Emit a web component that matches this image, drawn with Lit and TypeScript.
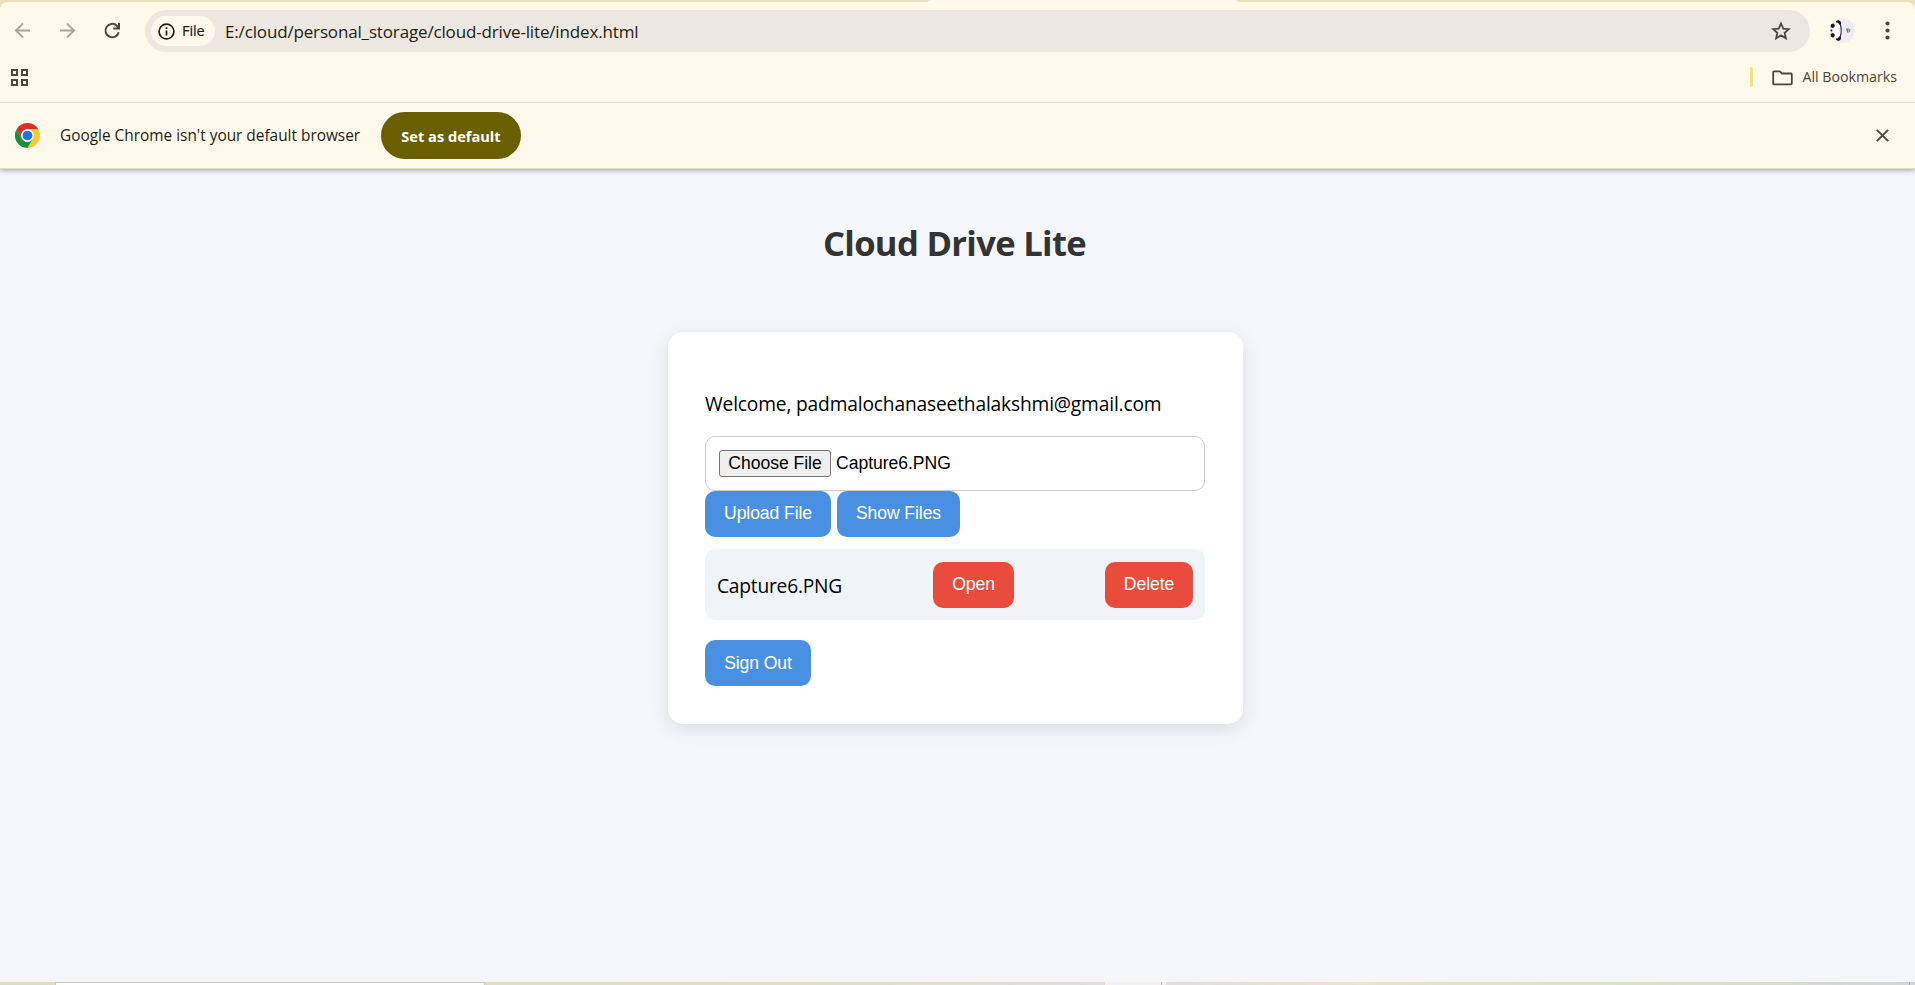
import { LitElement, html, css } from "lit";
import { customElement } from "lit/decorators.js";

@customElement("app-root")
class AppRoot extends LitElement {
  static styles = css`
    :host { display: flex; flex-direction: column; width: 100%; height: 985px; overflow: hidden; background: #f4f6fa; font-family: "Open Sans", sans-serif; color: #000; }
    * { box-sizing: border-box; }
    svg { display: block; flex: none; }
    .t { white-space: nowrap; }
    .chrome { flex: none; height: 169px; background: #ebe2bd; border-bottom: 1px solid #e4dcbc; box-shadow: 0 1px 5px rgba(60,64,67,.5); display: flex; flex-direction: column; }
    .strip { height: 2px; display: flex; justify-content: center; padding-left: 250px; }
    .tab { background: #fff7ea; width: 310px; border-radius: 4px 4px 0 0 / 2px 2px 0 0; }
    .body { flex: 1; display: flex; flex-direction: column; background: #fff9eb; border-radius: 8px 8px 0 0; }
    .bar { height: 58px; display: flex; align-items: center; }
    .omni { display: flex; align-items: center; height: 42px; margin-left: 23px; width: 1665px; border-radius: 21px; background: #ece8e1; padding: 0 19px 0 6px; }
    .chip { display: flex; align-items: center; gap: 7px; width: 64px; height: 30px; border-radius: 15px; background: #fff9eb; padding-left: 7px; font-size: 14.5px; font-weight: 500; color: #1e1c13; letter-spacing: -.1px; }
    .chip .t { -webkit-text-stroke: .2px; padding-bottom: 1px; }
    .url { margin-left: 10px; flex: 1; font-size: 17px; letter-spacing: -.155px; color: #1e1c13; }
    .nav { display: flex; width: 122px; padding-left: 10px; gap: 21px; }
    .avatar { margin-left: 19px; }
    .more { margin-left: 28px; }
    .marks { height: 42px; display: flex; align-items: center; padding: 0 18px 8px 9px; color: #4b4739; font-size: 14.2px; }
    .marks .grid { margin-top: 2px; }
    .marks .sp { flex: 1; }
    .marks .t { padding-bottom: 2px; }
    .sep { width: 3px; height: 20px; border-radius: 2px; background: #f3e47c; margin-right: 19px; }
    .folder { margin-right: 9px; margin-top: 1px; }
    .info { height: 66px; border-top: 1px solid #e5dfcf; display: flex; align-items: center; padding: 0 26px 0 15px; font-size: 15.4px; color: #1e1c13; }
    .logo { margin-right: 20px; }
    .msg { width: 321px; }
    .def { display: flex; align-items: center; justify-content: center; height: 47px; width: 140px; border-radius: 24px; background: #695f00; color: #fff; font-weight: 700; font-size: 14.6px; padding-top: 1px; margin-right: auto; }
    main { flex: 1; display: flex; flex-direction: column; align-items: center; padding-right: 4px; }
    h1 { margin: 45px 0 0; padding-right: 2px; font-size: 34.6px; letter-spacing: -.68px; line-height: 58px; font-weight: 700; color: #333; }
    .card { margin-top: 60px; width: 575px; height: 392px; background: #fff; border-radius: 15px; box-shadow: 0 5px 19px rgba(0,0,0,.1); padding: 57px 38px 0 37px; display: flex; flex-direction: column; }
    .hi { height: 30px; line-height: 30px; font-size: 19.2px; letter-spacing: -.17px; }
    .file { margin-top: 17px; height: 55px; border: 1px solid #ccc; border-radius: 10px; display: flex; align-items: flex-start; padding: 13px; font: 17.6px "Liberation Sans", Arial, sans-serif; letter-spacing: -.05px; }
    .choose { height: 27px; width: 112px; border: 1px solid #767676; border-radius: 3px; background: #efefef; display: flex; justify-content: center; align-items: center; margin-right: 5px; padding-bottom: 1px; }
    .nm { line-height: 26px; }
    .row { display: flex; gap: 6px; }
    .b { height: 46px; border-radius: 10px; background: #4a90e2; color: #fff; font: 17.6px "Liberation Sans", Arial, sans-serif; letter-spacing: -.1px; display: flex; align-items: center; justify-content: center; padding-bottom: 2px; white-space: nowrap; }
    .red { background: #e94c3d; }
    .up { width: 126px; } .show { width: 123px; } .open { width: 81px; } .del { width: 88px; } .out { width: 106px; }
    .red { padding-bottom: 1px; }
    .out { padding-bottom: 0; }
    .item { margin: 12px 0 20px; height: 71px; border-radius: 10px; background: #f0f3f8; display: flex; align-items: center; justify-content: space-between; padding: 0 12px; font-size: 19.2px; letter-spacing: -.22px; }
    .item span { padding-top: 2px; }
    .task { flex: none; height: 3px; display: flex; background: linear-gradient(90deg, #e0dcbd, #e6dcc0 40%, #e4dcd4 55%, #e4ddd8 62%, #eee0ca 71%, #e2e3bd 76%, #dce3bf 84%, #dadccb 91%, #d3d6d9); }
    .search { margin-left: 55px; width: 430px; background: #fff; border: 1px solid #c6c9cc; border-bottom: 0; }
    .tb { margin-left: 620px; width: 57px; background: #f2f1ef; border-right: 1px solid #bbb; }
    .tb2 { width: 4px; background: #f0efec; }
    .peek { width: 6px; margin-left: auto; border-left: 1px solid #aaa; }
  `;

  render() {
    const st = "#4b4739";
    const dim = "#aaa696";
    return html`
      <header class="chrome">
        <div class="strip"><i class="tab"></i></div>
        <div class="body">
          <div class="bar">
            <div class="nav">
              <svg width="24" height="24" viewBox="0 0 24 24" fill="none" stroke=${dim} stroke-width="1.9"><path d="M20 11.500H6.500M13 4.500l-7 7 7 7"/></svg>
              <svg width="24" height="24" viewBox="0 0 24 24" fill="none" stroke=${dim} stroke-width="1.9"><path d="M5 11.500h13.500M12 4.500l7 7-7 7"/></svg>
              <svg width="24" height="24" viewBox="0 0 24 24" fill="none" stroke=${st} stroke-width="2"><path d="M18.700 13.200A6.700 6.700 0 1 1 16.900 6.800L19 9M19 4v5.500h-5.700"/></svg>
            </div>
            <div class="omni">
              <div class="chip">
                <svg width="17" height="17" viewBox="0 0 17 17"><circle cx="8.500" cy="8.500" r="7.400" fill="none" stroke="#1e1c13" stroke-width="1.700"/><path d="M8.500 7.500v5M8.500 4.300v1.800" stroke="#1e1c13" stroke-width="1.700"/></svg>
                <span class="t">File</span>
              </div>
              <span class="t url">E:/cloud/personal_storage/cloud-drive-lite/index.html</span>
              <svg width="20" height="20" viewBox="0 0 20 20" fill="none" stroke=${st} stroke-width="1.800"><path d="M10 2.500l2.300 5.100 5.500.5-4.200 3.700 1.300 5.500-4.900-2.900-4.900 2.900 1.300-5.500L2.200 8.100l5.500-.5z"/></svg>
            </div>
            <svg class="avatar" width="26" height="26" viewBox="0 0 26 26">
              <circle cx="13.500" cy="12.500" r="12.300" fill="#eeedf5"/>
              <path d="M9 4A11 11 0 0 0 9 21A12 12 0 0 0 9 4z" fill="#fff"/>
              <path d="M11 5.500q2.500 7 0 14" fill="none" stroke="#33312f" stroke-width="1.200"/>
              <path d="M7 3.200q3-2.400 4.800.6l.2 2.200-1.500.8q-1-2.300-3.500-2.600zM7 21.800q3 2.400 4.800-.6l.2-2.200-1.500-.8q-1 2.300-3.500 2.600z" fill="#111"/>
              <path d="M2 6.500q2.500-2 3.500.3t-2 3.200L1.500 9zM2 18.500q2.500 2 3.500-.3t-2-3.200L1.500 16z" fill="#1a1a1a"/>
              <circle cx="2.400" cy="12.500" r=".9" fill="#222"/>
              <path d="M17 10.500l5 2-5 2.500z" fill="#fff"/>
              <path d="M17.500 10.500l1.200 4M19 10.300v4.400M20.700 11v3" stroke="#77757d" stroke-width="1.100"/>
            </svg>
            <svg class="more" width="9" height="20" viewBox="0 0 9 20" fill=${st}><circle cx="4.500" cy="2.500" r="2.100"/><circle cx="4.500" cy="9.500" r="2.100"/><circle cx="4.500" cy="16.500" r="2.100"/></svg>
          </div>
          <div class="marks">
            <svg class="grid" width="20" height="20" viewBox="0 0 20 20" fill="none" stroke=${st} stroke-width="2"><path d="M3 2h5v5H3zM13 2h5v5h-5zM3 12h5v5H3zM13 12h5v5h-5z"/></svg>
            <div class="sp"></div><i class="sep"></i>
            <svg class="folder" width="21" height="16" viewBox="0 0 21 16" fill="none" stroke=${st} stroke-width="1.800" stroke-linejoin="round"><path d="M2 1.300h5.800l2.200 2.200h9q.8 0 .8.800v9.200q0 .9-.9.900H2.100q-.9 0-.9-.9V2.200q0-.9.800-.9z"/></svg>
            <span class="t">All Bookmarks</span>
          </div>
          <div class="info">
            <svg class="logo" width="25" height="25" viewBox="0 0 48 48">
              <path d="M24 24V12h20.800A24 24 0 0 1 24 48l10.400-18z" fill="#fdc930"/>
              <path d="M3.200 12A24 24 0 0 1 44.800 12H24A12 12 0 0 0 13.600 30z" fill="#d93025"/>
              <path d="M3.200 12l10.400 18A12 12 0 0 0 34.400 30L24 48A24 24 0 0 1 3.200 12z" fill="#1e8e3e"/>
              <circle cx="24" cy="24" r="12" fill="#fff"/><circle cx="24" cy="24" r="9.300" fill="#1a73e8"/>
            </svg>
            <span class="t msg">Google Chrome isn't your default browser</span>
            <div class="def">Set as default</div>
            <svg width="13" height="13" viewBox="0 0 13 13" stroke=${st} stroke-width="1.900"><path d="M.8.8l11.400 11.400M12.200.8L.8 12.200"/></svg>
          </div>
        </div>
      </header>
      <main>
        <h1 class="t">Cloud Drive Lite</h1>
        <section class="card">
          <div class="hi t">Welcome, padmalochanaseethalakshmi@gmail.com</div>
          <div class="file"><div class="choose">Choose File</div><span class="nm">Capture6.PNG</span></div>
          <div class="row"><div class="b up">Upload File</div><div class="b show">Show Files</div></div>
          <div class="item"><span>Capture6.PNG</span><div class="b red open">Open</div><div class="b red del">Delete</div></div>
          <div class="b out">Sign Out</div>
        </section>
      </main>
      <footer class="task"><i class="search"></i><i class="tb"></i><i class="tb2"></i><i class="peek"></i></footer>
    `;
  }
}
